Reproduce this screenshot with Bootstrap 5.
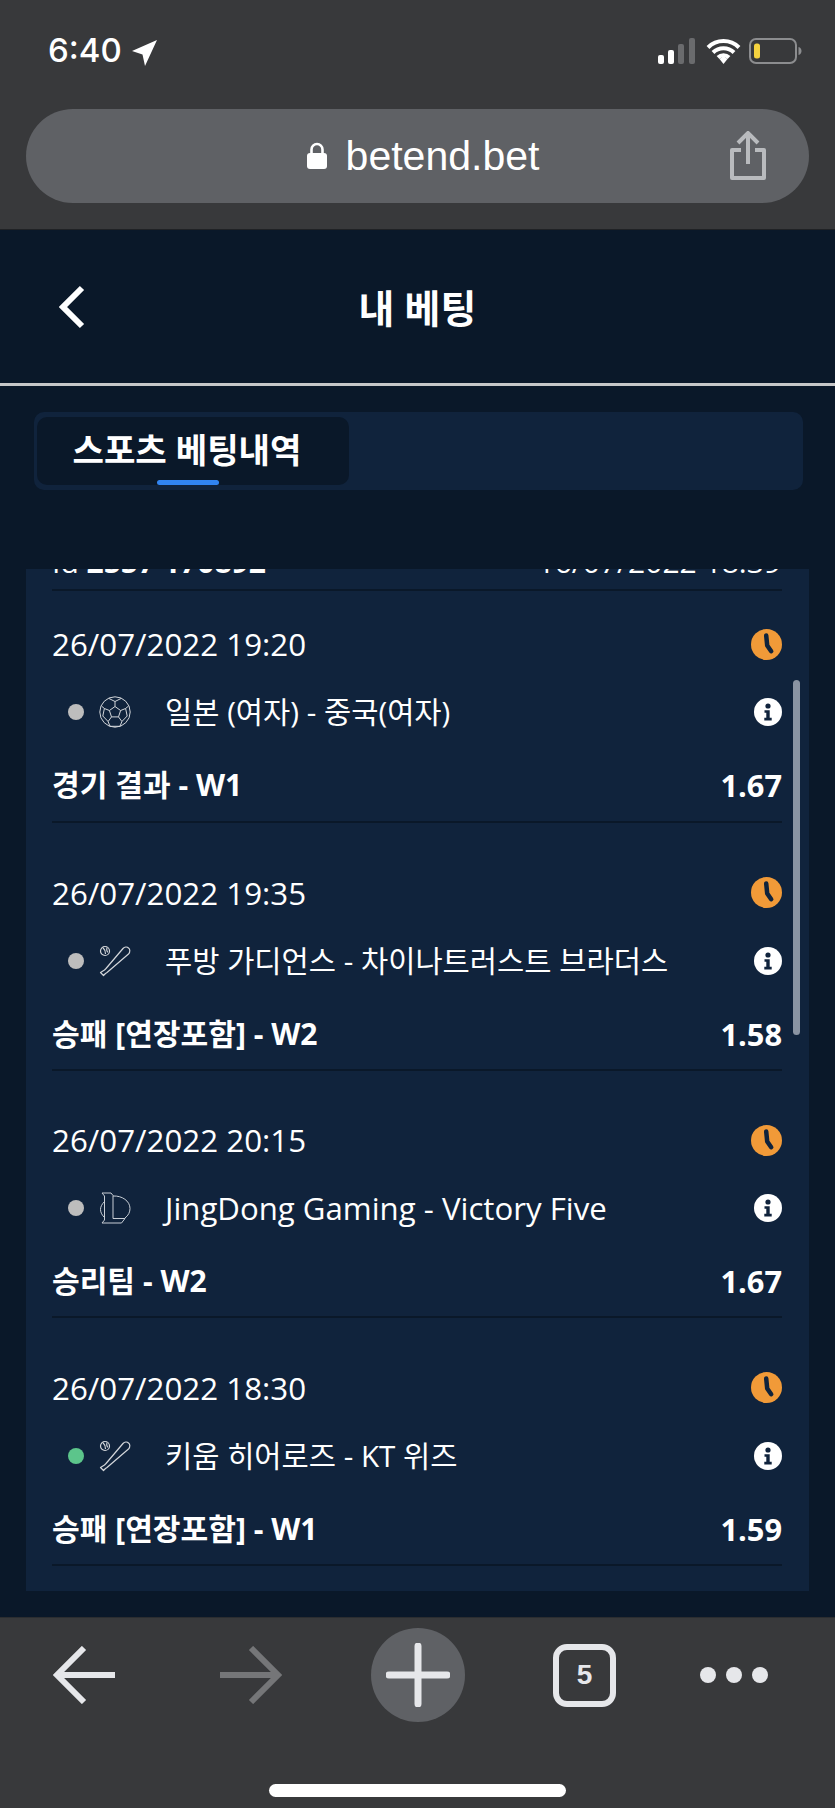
<!DOCTYPE html>
<html lang="ko">
<head>
  <meta charset="UTF-8" />
  <title>내 베팅</title>
  <link href="https://cdn.jsdelivr.net/npm/bootstrap@5.3.0/dist/css/bootstrap.min.css" rel="stylesheet" />
  <style>
    html, body { height: 1808px; overflow: hidden; }
    body {
      background: #0a1829;
      color: #fff;
      font-family: "Open Sans", "Noto Sans CJK KR", sans-serif;
    }
    .phone-page { height: 1808px; }

    /* browser chrome, top */
    .chrome-top { height: 230px; background: #38393b; border-bottom: 1px solid #202225; }
    .status-row { height: 109px; padding: 38px 32px 0 48px; }
    .status-time { font: 500 33px/1 Inter, sans-serif; margin-top: -4px; }
    .url-pill {
      height: 94px; margin: 0 26px; padding: 0 42px 0 0;
      background: #5f6165; border-radius: 47px;
    }
    .url-center { flex: 1; padding-left: 90px; }
    .url-text { font: 400 41px/1 "Liberation Sans", sans-serif; margin-left: 18px; }

    /* app header */
    .app-head {
      height: 156px; padding-left: 59px;
      display: grid; grid-template-columns: 1fr auto 1fr; align-items: center;
      border-bottom: 3px solid #c6c7c8;
    }
    .app-title { font-size: 39px; font-weight: 700; line-height: 1; margin-left: -59px; padding-top: 1px; }

    .tab-strip {
      height: 78px; margin: 26px 32px 0 34px; padding: 5px 3px;
      background: #10233c; border-radius: 10px;
    }
    .tab-active {
      width: 312px; height: 68px; padding-right: 12px; background: #0a1829; border-radius: 10px;
      font-size: 34.2px; font-weight: 700; line-height: 66px; text-align: center;
      position: relative;
    }
    .tab-mark {
      position: absolute; left: 120px; bottom: 0; width: 62px; height: 5px;
      background: #3184f0; border-radius: 3px;
    }

    /* bet list */
    .bet-panel {
      height: 1022px; margin: 79px 26px 0; padding: 0 27px 0 26px;
      background: #10233c; position: relative; overflow: hidden;
    }
    .bet-scroll {
      position: absolute; left: 767px; top: 111px; width: 7px; height: 355px;
      background: #8a94a3; border-radius: 4px;
    }
    .bet-top {
      height: 49px; margin-top: -27px; padding-right: 1px; border-bottom: 2px solid #0a1829;
      font-size: 30px; line-height: 40px;
    }
    .bet-row { height: 247.6px; padding-top: 49.6px; border-bottom: 2px solid #0a1829; }
    .bet-row.first-row { height: 232px; padding-top: 33px; }
    .bet-line { height: 40px; }
    .bet-date { font-size: 31.300px; line-height: 40px; }
    .bet-match { margin-top: 28px; }
    .bet-teams { font-size: 29.600px; line-height: 40px; }
    .bet-teams.latin-name { font-size: 31.200px; }
    .bet-market { margin-top: 33px; font-size: 30.100px; font-weight: 700; line-height: 40px; }
    .bet-odds { font-size: 30.800px; }
    .bet-dot { width: 16px; height: 16px; border-radius: 50%; background: #bdbdbd; margin-left: 16px; }
    .bet-dot.live { background: #5cc58b; }
    .sport-box { width: 32px; height: 32px; margin-left: 15px; margin-right: 34px; }

    /* browser chrome, bottom */
    .chrome-bottom { height: 191px; margin-top: 26px; background: #38393b; border-top: 1px solid #2b2d30; }
    .tool-row {
      display: grid; grid-template-columns: repeat(5, 167px); justify-items: center; align-items: center;
      height: 94px; margin-top: 10px;
    }
    .plus-round {
      width: 94px; height: 94px; border-radius: 50%; background: #5f6165;
    }
    .tabs-count {
      width: 63px; height: 63px; border: 6px solid #e6e7ea; border-radius: 14px;
      font: 700 28px/1 "Liberation Sans", sans-serif; color: #e6e7ea;
    }
    .more-dots { margin-right: 36px; }
    .home-bar { width: 297px; height: 13px; margin: 62px auto 0; background: #fff; border-radius: 7px; }
  </style>
</head>
<body>
  <svg width="0" height="0" class="d-block">
    <symbol id="ic-clock" viewBox="0 0 31 31">
      <circle cx="15.500" cy="15.500" r="15.500" fill="#f19a38"/>
      <path d="M15.200 6.500L16.200 16.500L20.200 22.200" fill="none" stroke="#10233c" stroke-width="4.500" stroke-linecap="round" stroke-linejoin="round"/>
    </symbol>
    <symbol id="ic-info" viewBox="0 0 28 28">
      <circle cx="14" cy="14" r="14" fill="#fff"/>
      <circle cx="14" cy="8" r="2.600" fill="#10233c"/>
      <path d="M10.500 12.200h5.200v7.600h2v2.600h-7.400v-2.600h2v-5h-1.800z" fill="#10233c"/>
    </symbol>
    <symbol id="ic-ball" viewBox="0 0 32 32">
      <g fill="none" stroke="#d3d6da" stroke-width="1">
        <circle cx="16" cy="16" r="15.200"/>
        <path d="M16 10.500l5.600 4-2.100 6.400h-7l-2.100-6.400zM16 10.500V5.500M21.600 14.500l5-2M19.500 20.900l3.400 4.600M12.500 20.900l-3.400 4.600M10.400 14.500l-5-2"/>
        <path d="M10 2.500l6 3 6-3M26.600 12.500l3-2.500M26.600 12.500l1.600 7.500M22.900 25.500l5.300-5.500M22.900 25.500l-1.900 4.800M9.100 25.500l1.900 4.800M9.100 25.500l-5.300-5.500M5.400 12.500l-3-2.500M5.400 12.500l-1.600 7.500M11 30.300h10"/>
      </g>
    </symbol>
    <symbol id="ic-bat" viewBox="0 0 32 32">
      <g fill="none" stroke="#d3d6da" stroke-width="1.200" stroke-linejoin="round">
        <circle cx="6" cy="6" r="4.500"/>
        <path d="M4 2.800c1.600 1.400 2.500 3.600 2.500 6.200M8 2.500c-.6 1.800-.4 3.400.6 4.800"/>
        <path d="M1.500 27.500L4.500 30.500L6.500 28.500L8 27.500L29.500 9C31.500 7 31 4 29.500 3C28 1.500 25.500 2 24 3.500L7 23.500L5.500 25Z"/>
      </g>
    </symbol>
    <symbol id="ic-lol" viewBox="0 0 32 32">
      <g fill="none" stroke="#c8ced5" stroke-width="1" stroke-linejoin="round">
        <path d="M3 1h9l2 2.500V26.500h12l-3.500 4.500H3l2.500-3V4z"/>
        <path d="M14 4C23 3.500 31 9 31 16.500c0 3.600-1.500 6.800-5 9.500"/>
        <path d="M5.500 9.500C2.600 12.500 1.500 15 1.500 17.500c0 3 1.700 5.800 4 8"/>
      </g>
    </symbol>
  </svg>

  <div class="phone-page d-flex flex-column">
    <div class="chrome-top flex-shrink-0">
      <div class="status-row d-flex justify-content-between align-items-start">
        <div class="d-flex align-items-center gap-2">
          <span class="status-time">6:40</span>
          <svg width="28" height="28" viewBox="0 0 28 28"><path d="M27 1L2 12l10.500 3.500L15 27z" fill="#fff"/></svg>
        </div>
        <div class="d-flex align-items-center">
          <svg width="40" height="26" viewBox="0 0 40 26">
            <rect x="0" y="17" width="6" height="9" rx="2" fill="#fff"/>
            <rect x="10" y="12" width="6" height="14" rx="2" fill="#fff"/>
            <rect x="20" y="6" width="6" height="20" rx="2" fill="#6a6b6d"/>
            <rect x="31" y="0" width="6" height="26" rx="2" fill="#6a6b6d"/>
          </svg>
          <svg class="ms-2" width="35" height="26" viewBox="0 0 35 26">
            <path d="M2 9.500a22 22 0 0 1 31 0M7 14.500a15 15 0 0 1 21 0M12 19.500a8 8 0 0 1 11 0" fill="none" stroke="#fff" stroke-width="4"/>
            <path d="M13.500 21l4-3 4 3-4 5z" fill="#fff"/>
          </svg>
          <svg class="ms-2" width="54" height="26" viewBox="0 0 54 26">
            <rect x="1" y="1" width="46" height="24" rx="6" fill="none" stroke="#8c8d8f" stroke-width="2"/>
            <rect x="5" y="5.500" width="6" height="15" rx="2.500" fill="#f5d33f"/>
            <path d="M49.500 9v8c2-.5 3-2.200 3-4s-1-3.500-3-4z" fill="#8c8d8f"/>
          </svg>
        </div>
      </div>
      <div class="url-pill d-flex align-items-center">
        <div class="url-center d-flex justify-content-center align-items-center">
          <svg width="22" height="28" viewBox="0 0 22 28">
            <path d="M5.500 12V7.500a5.500 5.500 0 0 1 11 0V12" fill="none" stroke="#fff" stroke-width="2.600"/>
            <rect x="1" y="11" width="20" height="16" rx="3" fill="#fff"/>
          </svg>
          <span class="url-text">betend.bet</span>
        </div>
        <svg width="38" height="50" viewBox="0 0 38 50">
          <path d="M19 33V4M9 12l10-10 10 10" fill="none" stroke="#b9bbbe" stroke-width="4"/>
          <path d="M12 19H3v28h32V19h-9" fill="none" stroke="#b9bbbe" stroke-width="4" stroke-linejoin="round"/>
        </svg>
      </div>
    </div>

    <div class="app-head flex-shrink-0">
      <svg width="26" height="44" viewBox="0 0 26 44"><path d="M23 3L4 22l19 19" fill="none" stroke="#fff" stroke-width="6"/></svg>
      <div class="app-title">내 베팅</div>
      <div></div>
    </div>

    <div class="tab-strip flex-shrink-0">
      <div class="tab-active">스포츠 베팅내역<span class="tab-mark"></span></div>
    </div>

    <div class="bet-panel flex-shrink-0">
      <div class="bet-top d-flex justify-content-between">
        <div>Id <b>2557 170892</b></div>
        <div>16/07/2022 18:39</div>
      </div>

      <div class="bet-row first-row">
        <div class="bet-line bet-date d-flex justify-content-between align-items-center">
          <span>26/07/2022 19:20</span>
          <svg width="31" height="31"><use href="#ic-clock"/></svg>
        </div>
        <div class="bet-line bet-match d-flex align-items-center">
          <span class="bet-dot"></span>
          <svg class="sport-box"><use href="#ic-ball"/></svg>
          <span class="bet-teams flex-grow-1">일본 (여자) - 중국(여자)</span>
          <svg width="28" height="28"><use href="#ic-info"/></svg>
        </div>
        <div class="bet-line bet-market d-flex justify-content-between">
          <span>경기 결과 - W1</span><span class="bet-odds">1.67</span>
        </div>
      </div>

      <div class="bet-row">
        <div class="bet-line bet-date d-flex justify-content-between align-items-center">
          <span>26/07/2022 19:35</span>
          <svg width="31" height="31"><use href="#ic-clock"/></svg>
        </div>
        <div class="bet-line bet-match d-flex align-items-center">
          <span class="bet-dot"></span>
          <svg class="sport-box"><use href="#ic-bat"/></svg>
          <span class="bet-teams flex-grow-1">푸방 가디언스 - 차이나트러스트 브라더스</span>
          <svg width="28" height="28"><use href="#ic-info"/></svg>
        </div>
        <div class="bet-line bet-market d-flex justify-content-between">
          <span>승패 [연장포함] - W2</span><span class="bet-odds">1.58</span>
        </div>
      </div>

      <div class="bet-row">
        <div class="bet-line bet-date d-flex justify-content-between align-items-center">
          <span>26/07/2022 20:15</span>
          <svg width="31" height="31"><use href="#ic-clock"/></svg>
        </div>
        <div class="bet-line bet-match d-flex align-items-center">
          <span class="bet-dot"></span>
          <svg class="sport-box"><use href="#ic-lol"/></svg>
          <span class="bet-teams latin-name flex-grow-1">JingDong Gaming - Victory Five</span>
          <svg width="28" height="28"><use href="#ic-info"/></svg>
        </div>
        <div class="bet-line bet-market d-flex justify-content-between">
          <span>승리팀 - W2</span><span class="bet-odds">1.67</span>
        </div>
      </div>

      <div class="bet-row">
        <div class="bet-line bet-date d-flex justify-content-between align-items-center">
          <span>26/07/2022 18:30</span>
          <svg width="31" height="31"><use href="#ic-clock"/></svg>
        </div>
        <div class="bet-line bet-match d-flex align-items-center">
          <span class="bet-dot live"></span>
          <svg class="sport-box"><use href="#ic-bat"/></svg>
          <span class="bet-teams flex-grow-1">키움 히어로즈 - KT 위즈</span>
          <svg width="28" height="28"><use href="#ic-info"/></svg>
        </div>
        <div class="bet-line bet-market d-flex justify-content-between">
          <span>승패 [연장포함] - W1</span><span class="bet-odds">1.59</span>
        </div>
      </div>

      <div class="bet-scroll"></div>
    </div>

    <div class="chrome-bottom flex-shrink-0">
      <div class="tool-row">
        <svg width="62" height="58" viewBox="0 0 62 58"><path d="M62 29H5M31 2L4 29l27 27" fill="none" stroke="#e6e7ea" stroke-width="6"/></svg>
        <svg width="62" height="58" viewBox="0 0 62 58"><path d="M0 29h57M31 2l27 27-27 27" fill="none" stroke="#757678" stroke-width="6"/></svg>
        <div class="plus-round d-flex align-items-center justify-content-center">
          <svg width="64" height="64" viewBox="0 0 64 64"><path d="M32 3v58M3 32h58" fill="none" stroke="#e6e7ea" stroke-width="7" stroke-linecap="round"/></svg>
        </div>
        <div class="tabs-count d-flex align-items-center justify-content-center">5</div>
        <svg class="more-dots" width="68" height="16" viewBox="0 0 68 16"><circle cx="8" cy="8" r="8" fill="#e6e7ea"/><circle cx="34" cy="8" r="8" fill="#e6e7ea"/><circle cx="60" cy="8" r="8" fill="#e6e7ea"/></svg>
      </div>
      <div class="home-bar"></div>
    </div>
  </div>

  <script src="https://cdn.jsdelivr.net/npm/bootstrap@5.3.0/dist/js/bootstrap.bundle.min.js"></script>
</body>
</html>
